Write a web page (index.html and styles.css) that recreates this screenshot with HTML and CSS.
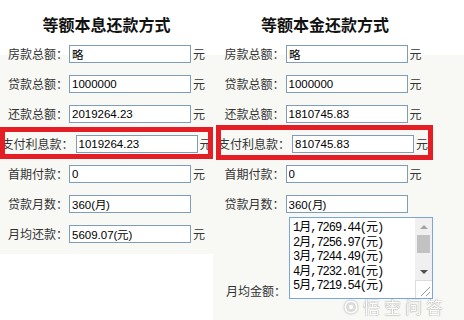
FILE: index.html
```html
<!DOCTYPE html>
<html lang="zh-CN">
<head>
    <meta charset="UTF-8">
    <title>房贷计算</title>
    <link rel="stylesheet" href="styles.css">
</head>
<body>
    <div class="page">
        <section class="calc calc-left">
            <h2 class="calc-title">等额本息还款方式</h2>
            <div class="row"><span class="label">房款总额：</span><input class="field" value="略" readonly><span class="unit">元</span></div>
            <div class="row"><span class="label">贷款总额：</span><input class="field" value="1000000" readonly><span class="unit">元</span></div>
            <div class="row"><span class="label">还款总额：</span><input class="field" value="2019264.23" readonly><span class="unit">元</span></div>
            <div class="row marked marked-left"><span class="label">支付利息款：</span><input class="field" value="1019264.23" readonly><span class="unit">元</span></div>
            <div class="row"><span class="label">首期付款：</span><input class="field" value="0" readonly><span class="unit">元</span></div>
            <div class="row"><span class="label">贷款月数：</span><input class="field" value="360(月)" readonly><span class="unit blank"></span></div>
            <div class="row"><span class="label">月均还款：</span><input class="field" value="5609.07(元)" readonly><span class="unit">元</span></div>
        </section>

        <section class="calc calc-right">
            <h2 class="calc-title">等额本金还款方式</h2>
            <div class="row"><span class="label">房款总额：</span><input class="field" value="略" readonly><span class="unit">元</span></div>
            <div class="row"><span class="label">贷款总额：</span><input class="field" value="1000000" readonly><span class="unit">元</span></div>
            <div class="row"><span class="label">还款总额：</span><input class="field" value="1810745.83" readonly><span class="unit">元</span></div>
            <div class="row marked marked-right"><span class="label">支付利息款：</span><input class="field" value="810745.83" readonly><span class="unit">元</span></div>
            <div class="row"><span class="label">首期付款：</span><input class="field" value="0" readonly><span class="unit">元</span></div>
            <div class="row"><span class="label">贷款月数：</span><input class="field" value="360(月)" readonly><span class="unit blank"></span></div>
            <div class="row row-list">
                <span class="label">月均金额：</span>
                <div class="textbox">
                    <div class="textbox-lines">1月,7269.44(元)
2月,7256.97(元)
3月,7244.49(元)
4月,7232.01(元)
5月,7219.54(元)</div>
                    <div class="scrollbar">
                        <div class="sb-btn"><span class="arrow-up"></span></div>
                        <div class="sb-thumb"></div>
                        <div class="sb-track"></div>
                        <div class="sb-btn"><span class="arrow-down"></span></div>
                        <div class="sb-corner">
                            <svg width="16" height="16" viewBox="0 0 16 16">
                                <line x1="14" y1="5" x2="5" y2="14" stroke="#9a9a9a" stroke-width="1"/>
                                <line x1="14" y1="10" x2="10" y2="14" stroke="#9a9a9a" stroke-width="1"/>
                            </svg>
                        </div>
                    </div>
                </div>
            </div>
        </section>

        <div class="watermark">
            <svg width="14" height="14" viewBox="0 0 16 16">
                <circle cx="8" cy="8" r="6.5" fill="none" stroke="#fff" stroke-width="2"/>
                <circle cx="8" cy="8" r="2.5" fill="#fff"/>
            </svg>
            <span>悟空问答</span>
        </div>
    </div>
</body>
</html>
```

FILE: styles.css
```css
body {
    margin: 0;
    background: #fff;
    font-family: "Noto Sans CJK SC", "Liberation Sans", sans-serif;
    font-size: 12px;
    color: #333;
}

.page {
    position: relative;
    display: flex;
    align-items: flex-start;
    width: 464px;
    height: 320px;
    overflow: hidden;
}

.calc {
    background: linear-gradient(#fff 55px, #f8f9f5 55px);
}

.calc-left {
    width: 213px;
    padding-bottom: 5px;
}

.calc-right {
    width: 220px;
    height: 320px;
    padding-right: 31px;
}

.calc-title {
    margin: 0;
    padding: 14px 0 5px;
    font-size: 16px;
    line-height: 20px;
    font-weight: bold;
    color: #111;
    text-align: center;
}

.calc-right .calc-title {
    margin-left: 4px;
}

.row {
    position: relative;
    display: flex;
    justify-content: center;
    align-items: center;
    height: 30px;
}

.label {
    white-space: nowrap;
    line-height: 16px;
    margin-right: 1px;
}

.field {
    width: 122px;
    height: 18px;
    box-sizing: border-box;
    margin: 0;
    padding: 0 2px;
    border: 1px solid #7f9db9;
    background: #fff;
    font-family: "Liberation Sans", sans-serif;
    font-size: 11.5px;
    color: #000;
    outline: none;
}

.unit {
    width: 12px;
    margin-left: 2px;
    line-height: 16px;
}

.marked::after {
    content: "";
    position: absolute;
    border: 5px solid #e51e25;
}

.marked-left::after {
    top: -2px;
    bottom: 0;
    left: 0;
    right: 0;
}

.marked-right::after {
    top: -4px;
    bottom: -1px;
    left: 3px;
    right: 0;
}

.marked .field {
    margin-left: 1px;
}

.row-list {
    justify-content: flex-start;
    align-items: flex-end;
    height: auto;
    margin-top: -2px;
    padding-left: 13px;
}

.row-list .label {
    margin-right: 3px;
}

.textbox {
    display: flex;
    width: 163px;
    height: 82px;
    box-sizing: border-box;
    border: 1px solid #7aa5e0;
    background: #fff;
}

.textbox-lines {
    flex: 1;
    padding: 3px 0 0 3px;
    white-space: pre;
    overflow: hidden;
    font-family: "Liberation Mono", "Noto Sans CJK SC", monospace;
    font-size: 12px;
    letter-spacing: -1px;
    line-height: 14.5px;
    color: #000;
}

.scrollbar {
    display: flex;
    flex-direction: column;
    width: 17px;
    background: #f0f0f0;
}

.sb-btn {
    display: flex;
    justify-content: center;
    align-items: center;
    height: 17px;
}

.arrow-up {
    border-left: 4px solid transparent;
    border-right: 4px solid transparent;
    border-bottom: 4px solid #a3a3a3;
}

.arrow-down {
    border-left: 4px solid transparent;
    border-right: 4px solid transparent;
    border-top: 4px solid #505050;
}

.sb-thumb {
    height: 18px;
    margin: 0 2px;
    background: #c2c2c2;
}

.sb-track {
    flex: 1;
}

.sb-corner {
    height: 18px;
    background: #fff;
    border-top: 1px solid #dcdcdc;
    border-left: 1px solid #dcdcdc;
    box-sizing: border-box;
    display: flex;
    justify-content: flex-end;
    align-items: flex-end;
}

.watermark {
    position: absolute;
    left: 344px;
    top: 298px;
    display: flex;
    align-items: center;
    gap: 5px;
    font-size: 17px;
    line-height: 18px;
    letter-spacing: 4px;
    color: #fff;
    text-shadow: 0 0 1px #888, 0 0 1px #888;
    opacity: 0.9;
}

.watermark svg {
    filter: drop-shadow(0 0 1px #888);
}
```
